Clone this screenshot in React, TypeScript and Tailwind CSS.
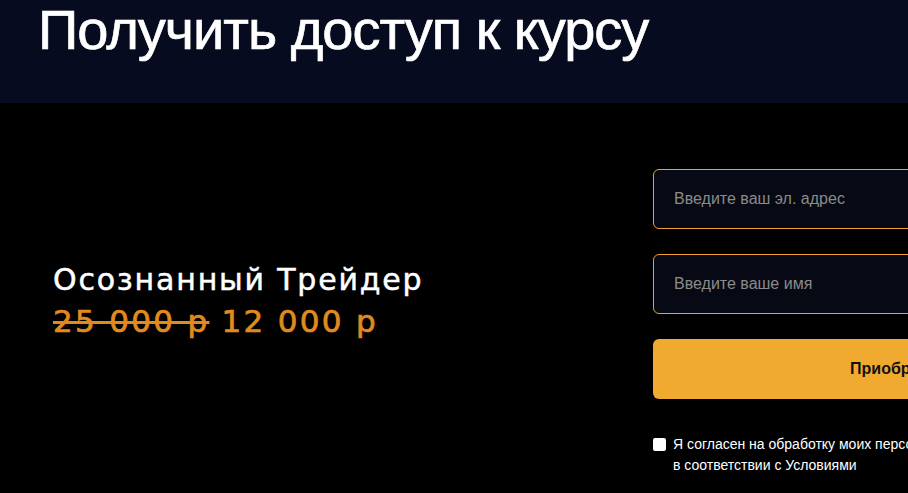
import React from "react"

const App = () => {
    return (
        <div className="w-full h-[493px] overflow-hidden bg-black">
            <div className="h-[103px] bg-[#070b1f] pl-[38px] pt-[2px]">
                <h1
                    className="text-[56px] leading-[56px] text-white tracking-[-1px] [-webkit-text-stroke:0.7px_white]"
                    style={{fontFamily: '"Liberation Sans", Arial, sans-serif'}}
                >
                    Получить доступ к курсу
                </h1>
            </div>
            <div className="flex pl-[53px] pt-[64px]">
                <div className="w-[600px] shrink-0 pt-[94px]" style={{fontFamily: '"DejaVu Sans", Inter, sans-serif'}}>
                    <h2 className="text-white text-[30px] leading-[38px] tracking-[1.8px] [-webkit-text-stroke:0.5px_white]">Осознанный Трейдер</h2>
                    <div className="text-[#e18b1f] text-[31px] leading-[40px] mt-[2px] tracking-[2.3px] [-webkit-text-stroke:0.7px_#e18b1f]">
                        <span className="line-through">25 000 р</span> 12 000 р
                    </div>
                </div>
                <form className="w-[490px] shrink-0 flex flex-col mt-[2px]" style={{fontFamily: '"Liberation Sans", Arial, sans-serif'}}>
                    <input
                        type="text"
                        placeholder="Введите ваш эл. адрес"
                        className="h-[60px] rounded-md border border-[#f0a030] bg-[#070a14] px-5 text-[16px] text-white placeholder:text-[#8a8a8a] outline-none"
                    />
                    <input
                        type="text"
                        placeholder="Введите ваше имя"
                        className="mt-[25px] h-[60px] rounded-md border border-[#f0a030] bg-[#070a14] px-5 text-[16px] text-white placeholder:text-[#8a8a8a] outline-none"
                    />
                    <button
                        type="button"
                        className="mt-[25px] h-[60px] rounded-md bg-[#f0aa30] text-[16px] font-bold text-[#111]"
                    >
                        Приобрести
                    </button>
                    <label className="mt-[35px] flex items-start gap-[7px] text-[14px] leading-[21px] text-white">
                        <span className="mt-[4px] w-[13px] h-[13px] bg-white rounded-[2px] shrink-0"></span>
                        <span>
                            Я согласен на обработку моих персональных данных
                            <br />
                            в соответствии с Условиями
                        </span>
                    </label>
                </form>
            </div>
        </div>
    )
}

export default App
